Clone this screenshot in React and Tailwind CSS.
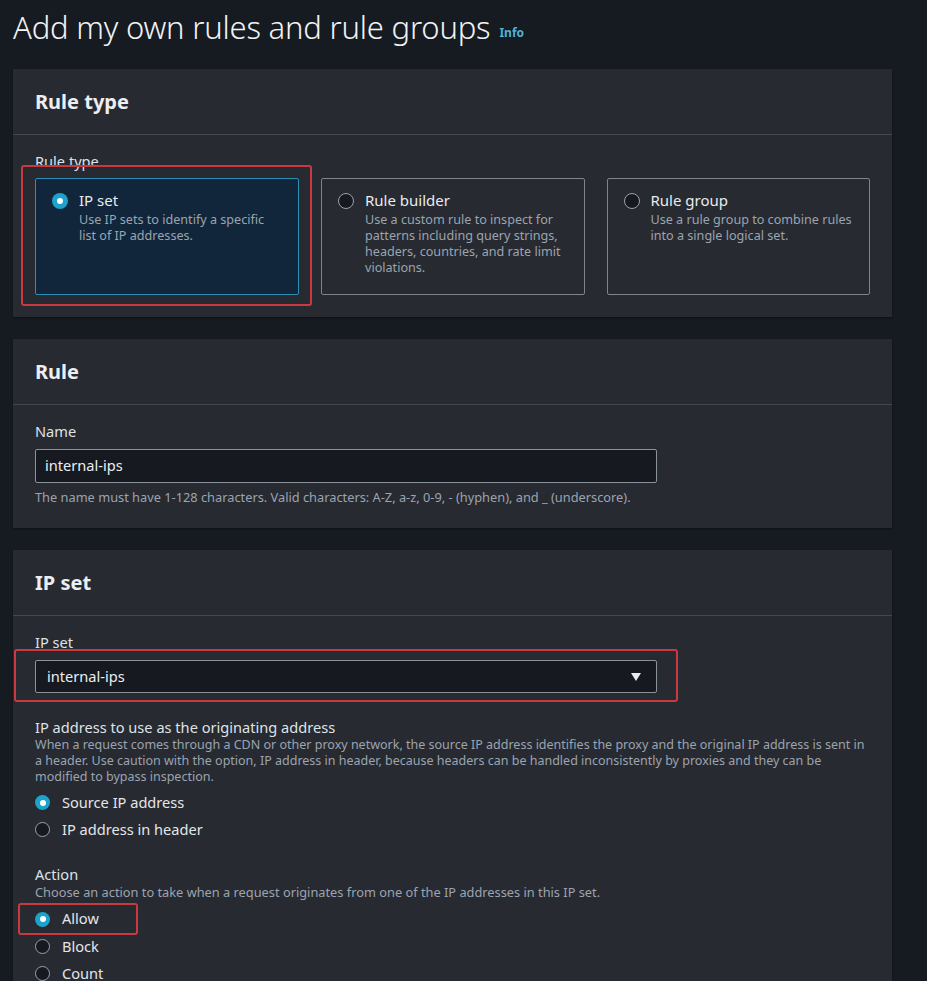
import React from 'react';

const font = { fontFamily: '"Noto Sans", "Open Sans", Arial, sans-serif' };

const Radio = ({ checked, size = 'sm' }) => {
  const dim = size === 'lg' ? 'w-[16px] h-[16px]' : 'w-[15px] h-[15px]';
  if (checked) {
    return (
      <span className={`${dim} shrink-0 rounded-full bg-[#1ba3cc] flex items-center justify-center`}>
        <span className="w-[6px] h-[6px] rounded-full bg-white"></span>
      </span>
    );
  }
  return <span className={`${dim} block shrink-0 rounded-full border-[1.5px] border-[#9aa3ae] bg-[#16191f]`}></span>;
};

const Panel = ({ title, children }) => (
  <section className="w-[879px] bg-[#272a31] shadow-[0_1px_2px_rgba(0,0,0,0.4)]">
    <div className="h-[66px] flex items-center px-[22px] border-b border-[#424851]">
      <h2 className="text-[20px] font-bold text-[#eceef1]">{title}</h2>
    </div>
    {children}
  </section>
);

const TypeCard = ({ title, desc, selected }) => (
  <div
    className={`w-[264px] h-[117px] rounded-[2px] border px-[16px] pt-[11px] ${
      selected ? 'bg-[#11263a] border-[#2a8fb5]' : 'bg-[#272a31] border-[#7d848e]'
    }`}
  >
    <div className="flex items-start gap-[11px]">
      <div className="pt-[3px] shrink-0">
        <Radio checked={selected} size="lg" />
      </div>
      <div>
        <div className="text-[15px] leading-[20px] text-[#e9ebed] mb-[2px]">{title}</div>
        <div className="text-[12.6px] leading-[16px] text-[#9ba4b0]">{desc}</div>
      </div>
    </div>
  </div>
);

const RadioRow = ({ label, checked }) => (
  <div className="h-[27px] flex items-center gap-[12px]">
    <Radio checked={checked} />
    <span className="text-[14.6px] text-[#e4e6e9]">{label}</span>
  </div>
);

export default function App() {
  return (
    <div className="min-h-screen bg-[#161a21] px-[13px] overflow-hidden" style={font}>
      {/* Page title */}
      <div className="h-[69px] pt-[6px] flex items-start">
        <h1 className="text-[31px] leading-[42px] font-light text-[#f2f3f5] tracking-[-0.2px]">
          Add my own rules and rule groups
        </h1>
        <a href="#" className="ml-[9px] mt-[18px] text-[12px] font-bold text-[#4bb4d8]">Info</a>
      </div>

      <div className="flex flex-col gap-[22px]">
        {/* Rule type */}
        <Panel title="Rule type">
          <div className="px-[22px] pt-[16px] pb-[22px]">
            <div className="text-[14.6px] leading-[20px] text-[#dfe2e6] mb-[7px]">Rule type</div>
            <div className="flex gap-[22px]">
              <div className="relative">
                <TypeCard selected title="IP set" desc="Use IP sets to identify a specific list of IP addresses." />
                <div className="absolute left-[-14px] top-[-13px] w-[291px] h-[141px] border-2 border-[#c83a3f] rounded-[3px] pointer-events-none"></div>
              </div>
              <TypeCard
                title="Rule builder"
                desc="Use a custom rule to inspect for patterns including query strings, headers, countries, and rate limit violations."
              />
              <TypeCard title="Rule group" desc="Use a rule group to combine rules into a single logical set." />
            </div>
          </div>
        </Panel>

        {/* Rule */}
        <Panel title="Rule">
          <div className="px-[22px] pt-[16px] pb-[23px]">
            <div className="text-[14.6px] leading-[20px] text-[#dfe2e6] mb-[8px]">Name</div>
            <div className="w-[622px] h-[34px] border border-[#8a929c] rounded-[2px] bg-[#16191f] flex items-center px-[9px]">
              <span className="text-[14.6px] text-[#eceef1]">internal-ips</span>
            </div>
            <div className="mt-[6px] text-[12.8px] leading-[16px] text-[#9ba4b0]">
              The name must have 1-128 characters. Valid characters: A-Z, a-z, 0-9, - (hyphen), and _ (underscore).
            </div>
          </div>
        </Panel>

        {/* IP set */}
        <Panel title="IP set">
          <div className="px-[22px] pt-[16px] pb-[22px]">
            <div className="text-[14.6px] leading-[20px] text-[#dfe2e6] mb-[8px]">IP set</div>
            <div className="relative w-[622px]">
              <div className="h-[33px] border border-[#8a929c] rounded-[2px] bg-[#16191f] flex items-center justify-between pl-[11px] pr-[14px]">
                <span className="text-[14.6px] text-[#eceef1]">internal-ips</span>
                <svg width="12" height="10" viewBox="0 0 12 10">
                  <path d="M1 1 L11 1 L6 9 Z" fill="#e9ebed" />
                </svg>
              </div>
              <div className="absolute left-[-21px] top-[-11px] right-[-21px] bottom-[-9px] border-2 border-[#c83a3f] rounded-[3px] pointer-events-none"></div>
            </div>

            <div className="mt-[24px] text-[14.6px] leading-[20px] text-[#dfe2e6]">
              IP address to use as the originating address
            </div>
            <div className="text-[12.5px] leading-[16px] text-[#9ba4b0]">
              When a request comes through a CDN or other proxy network, the source IP address identifies the proxy and the original IP address is sent in a header. Use caution with the option, IP address in header, because headers can be handled inconsistently by proxies and they can be modified to bypass inspection.
            </div>
            <div className="mt-[4px]">
              <RadioRow checked label="Source IP address" />
              <RadioRow label="IP address in header" />
            </div>

            <div className="mt-[21px] text-[14.6px] leading-[20px] text-[#dfe2e6]">Action</div>
            <div className="text-[12.8px] leading-[16px] text-[#9ba4b0]">
              Choose an action to take when a request originates from one of the IP addresses in this IP set.
            </div>
            <div className="mt-[5px]">
              <div className="relative w-fit">
                <div className="h-[28px] flex items-center gap-[12px]">
                  <Radio checked />
                  <span className="text-[14.6px] text-[#e4e6e9]">Allow</span>
                </div>
                <div className="absolute left-[-17px] top-[-2px] w-[120px] h-[32px] border-2 border-[#c83a3f] rounded-[3px] pointer-events-none"></div>
              </div>
              <RadioRow label="Block" />
              <RadioRow label="Count" />
            </div>
          </div>
        </Panel>
      </div>
    </div>
  );
}
